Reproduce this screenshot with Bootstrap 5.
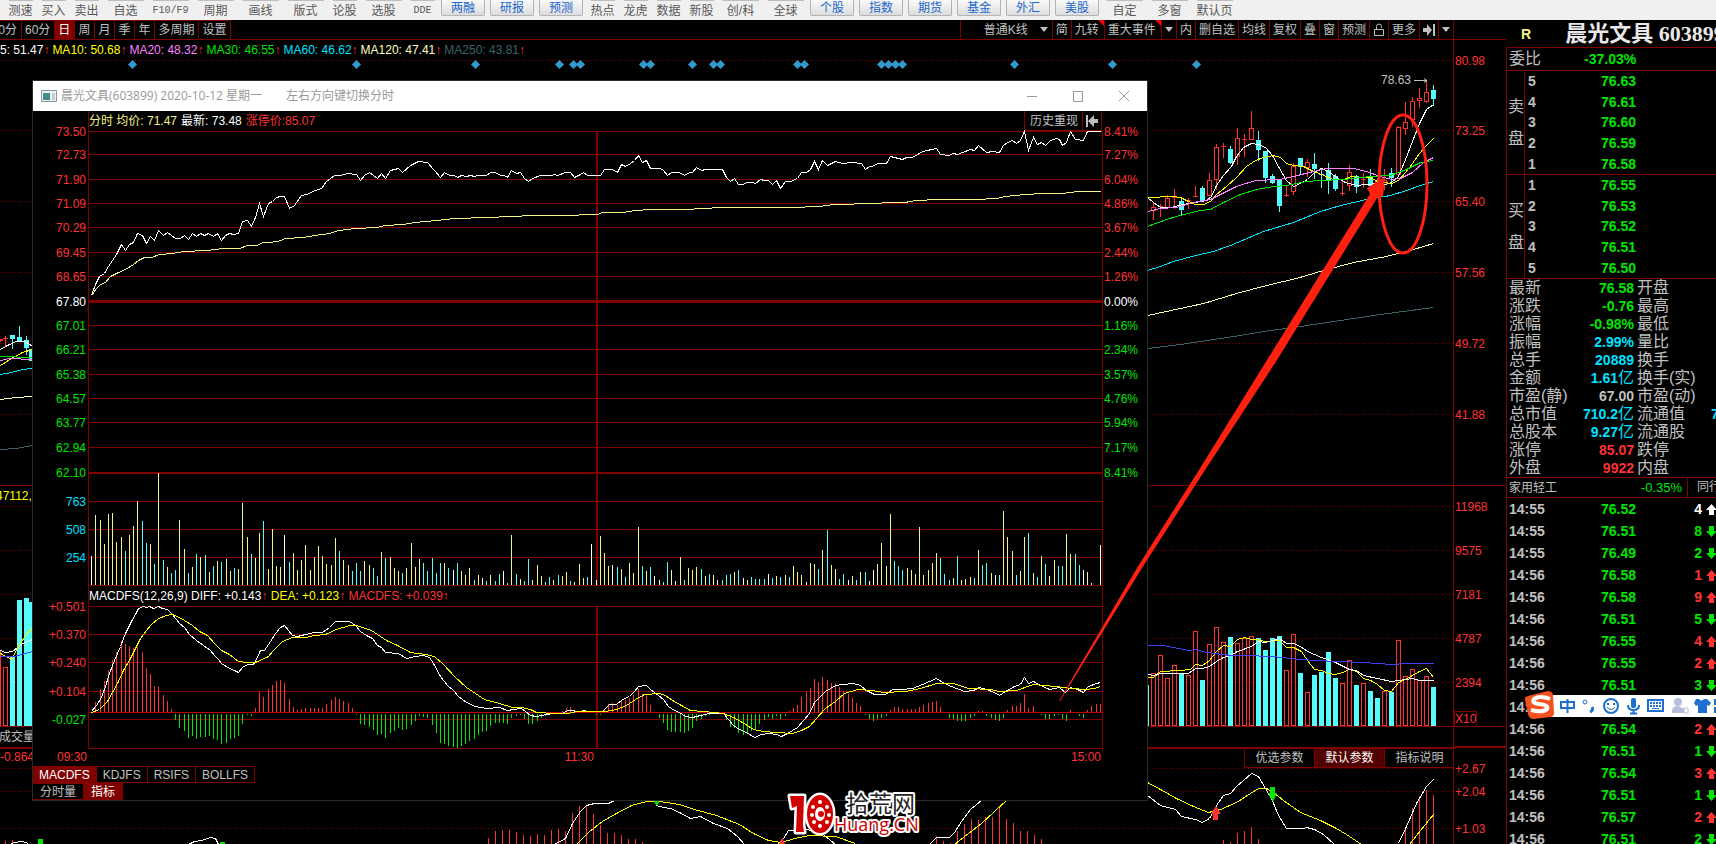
<!DOCTYPE html>
<html lang="zh-CN">
<head>
<meta charset="utf-8">
<meta name="viewport" content="width=device-width, initial-scale=1">
<title>晨光文具 603899</title>
<link href="https://cdn.jsdelivr.net/npm/bootstrap@5.3.0/dist/css/bootstrap.min.css" rel="stylesheet">
<style>
:root{--maroon:#800000;--red:#ff3232;--green:#00e600;--cyan:#00e0ff;--cream:#f5f587;--grey:#c0c0c0}
body{background:#000;color:var(--grey);font-family:"Liberation Sans","Noto Sans CJK SC",sans-serif;font-size:12px;line-height:16px;height:100vh;overflow:hidden}
button,select{font:inherit;color:inherit;background:none;border:0;padding:0;white-space:nowrap}
svg{display:block;overflow:visible}
svg text{font-size:12px;white-space:pre}
.t-red{color:var(--red)}.t-green{color:var(--green)}.t-cyan{color:var(--cyan)}.t-cream{color:var(--cream)}
.ma-10{color:#ff0}.ma-20{color:#ff80ff}.ma-120{color:#ffffc0}.ma-250{color:#3a6468}

.menu-bar{height:20px;flex:none;background:#f0f0f0;color:#585858;padding-left:4px}
.menu-bar button{flex:none;width:45px;height:20px;padding-top:1px;line-height:18px;background:linear-gradient(#bdbdbd,#bdbdbd) center top/36px 1px no-repeat}
.menu-bar .cell-s{width:33px;background-size:24px 1px}
.menu-bar .cell-btn{width:44px;height:16px;margin:0 3px 0 2px;line-height:14px;padding:0;color:#1a66cc;background:linear-gradient(#fafafa,#dcdcdc);border:1px solid #b4b4b4;border-top:0;border-radius:0 0 2px 2px}
.menu-mono{font-family:"Liberation Mono",monospace;font-size:10px}

.period-bar{height:20px;border-bottom:1px solid var(--maroon)}
.periods button{height:19px;padding:0 4px 0 3px;border-right:1px solid var(--maroon);border-top:1px solid var(--maroon)}
.periods .cut{width:22px;overflow:hidden;direction:rtl}
.periods .on,.tabs .on{background:var(--maroon);color:#fff}
.tools{margin-right:52px;border-right:1px solid var(--maroon)}
.tools>*{height:19px;padding:0 3px;border-left:1px solid var(--maroon);position:relative}
.tools select{width:92px;padding:0 0 0 23px;appearance:none;border-left:1px solid var(--maroon);background:url("data:image/svg+xml,%3Csvg xmlns='http://www.w3.org/2000/svg' width='8' height='5'%3E%3Cpath d='M0 0h8L4 5z' fill='%23c0c0c0'/%3E%3C/svg%3E") right 4px center no-repeat}
.tools .flag{padding-right:5px}
.tools .flag::after{content:"";position:absolute;right:0;top:0;border-top:6px solid red;border-left:6px solid transparent}
.ma-row{height:20px;gap:3px}

.macd-row{height:21px;border-top:2px solid var(--maroon);margin-right:52px}
.macd-tabs button{width:70px;border-left:1px solid var(--maroon);border-bottom:1px solid var(--maroon)}
.macd-tabs .on{background:#500000;color:#fff}

.history{top:60px;left:32px;right:358px;background:#000;border:1px solid #2b2b2b}
.history-title{height:30px;background:#fff;color:#999;padding:0 18px 0 8px;font-family:"Open Sans","Noto Sans CJK SC",sans-serif}
.history-head{height:20px;padding-right:45px}
.history-head .lead-in{margin-left:56px;gap:4px}
.history-head button{height:20px;border:1px solid var(--maroon);border-width:0 1px 1px 0;padding:0 3px}
.history-head .replay{padding:0 4px 0 5px;border-left-width:1px}
.tabs button{height:17px;padding:0 6px;border:1px solid var(--maroon);border-left-width:0}
.tabs .wide-tab{padding:0 7px}

.quote{width:210px;flex:none;overflow:hidden;white-space:nowrap}
.quote-name{height:27px;padding-left:15px}
.quote-name h1{font:bold 22px/27px "Liberation Serif","Noto Sans CJK SC",serif;color:#e8e8e8;margin:0 0 0 34px}
.quote-body{border:1px solid var(--maroon);border-width:1px 0 0 1px}
.num{font-weight:bold;font-size:14px}
.zh{font-size:16px}
.bid-ratio{height:22px;padding:0 0 0 2px}
.bid-ratio .num{margin-left:43px}
.book{height:104px;border-top:1px solid var(--maroon)}
.book .side{width:18px;padding-left:1px;border-right:1px solid var(--maroon);font-size:16px;gap:16px}
.book table{width:111px;height:103px}
.book td:first-child{padding-left:3px}
.quote td,.quote th{padding:0;line-height:14px;font-weight:normal}
.quote td.num{font-weight:bold}
.facts{height:199px;border-top:1px solid var(--maroon)}
.facts table{width:270px;height:198px;table-layout:fixed}
.facts td,.facts th{font-size:16px;line-height:16px}
.facts th{padding-left:2px}
.facts td.num{font-size:14px;text-align:right;padding-right:1px}
.trade{height:21px;border:1px solid var(--maroon);border-width:1px 0;padding-left:2px}
.trade a{color:var(--grey);text-decoration:none}
.trade .change{font-size:13px}
.trade .peer{height:19px;border-left:1px solid var(--maroon);margin-left:5px;padding:0 0 0 9px;line-height:19px;width:29px}
.ticks{width:209px;table-layout:fixed}
.ticks tr{height:22px}
.ticks td:first-child{padding-left:2px}
.ime{left:0;right:0;top:193px;height:28px}
.ime .strip{left:36px;right:0;top:4px;height:22px;background:#fff}
.mark-name{font-size:23px}
.mark-site{font-size:18px;font-family:"Open Sans",sans-serif}
</style>
</head>
<body class="d-flex flex-column">

<nav class="menu-bar d-flex">
  <button class="cell-s">测速</button><button class="cell-s">买入</button><button class="cell-s">卖出</button><button>自选</button><button class="menu-mono">F10/F9</button><button>周期</button><button>画线</button><button>版式</button><button class="cell-s">论股</button><button>选股</button><button class="cell-s menu-mono">DDE</button><button class="cell-btn">两融</button><button class="cell-btn">研报</button><button class="cell-btn">预测</button><button class="cell-s">热点</button><button class="cell-s">龙虎</button><button class="cell-s">数据</button><button class="cell-s">新股</button><button>创/科</button><button>全球</button><button class="cell-btn">个股</button><button class="cell-btn">指数</button><button class="cell-btn">期货</button><button class="cell-btn">基金</button><button class="cell-btn">外汇</button><button class="cell-btn">美股</button><button>自定</button><button>多窗</button><button>默认页</button>
</nav>

<div class="d-flex">
  <main class="position-relative flex-grow-1">
    <div class="period-bar d-flex justify-content-between">
      <div class="periods d-flex">
        <button class="cut">30分</button><button>60分</button><button class="on">日</button><button>周</button><button>月</button><button>季</button><button>年</button><button>多周期</button><button>设置</button>
      </div>
      <div class="tools d-flex">
        <select aria-label="K线类型"><option>普通K线</option></select>
        <button>简</button><button class="flag">九转</button><button class="flag">重大事件</button>
        <button aria-label="事件菜单"><svg width="8" height="5"><path d="M0 0h8L4 5z" fill="#c0c0c0"/></svg></button>
        <button>内</button><button>删自选</button><button>均线</button><button>复权</button><button>叠</button><button>窗</button><button>预测</button>
        <button aria-label="锁定"><svg width="12" height="14" fill="none" stroke="#c0c0c0"><path d="M1.500 6.500h9v6h-9zM3.500 6V3.500q0-2.500 2.500-2.500t2.500 2.500V5"/></svg></button>
        <button>更多</button>
        <button aria-label="收起"><svg width="12" height="12" fill="#c0c0c0"><path d="M0 4h4V0l5 6-5 6V8H0zM10 0h2v12h-2z"/></svg></button>
        <button aria-label="菜单"><svg width="8" height="5"><path d="M0 0h8L4 5z" fill="#c0c0c0"/></svg></button>
      </div>
    </div>

    <div class="ma-row d-flex align-items-center">
      <span class="text-white">5: 51.47<span class="t-red">↑</span></span>
      <span class="ma-10">MA10: 50.68<span class="t-red">↑</span></span>
      <span class="ma-20">MA20: 48.32<span class="t-red">↑</span></span>
      <span class="t-green">MA30: 46.55<span class="t-red">↑</span></span>
      <span class="t-cyan">MA60: 46.62<span class="t-red">↑</span></span>
      <span class="ma-120">MA120: 47.41<span class="t-red">↑</span></span>
      <span class="ma-250">MA250: 43.81<span class="t-red">↑</span></span>
    </div>

    <svg id="daily" viewBox="0 60 1506 687" width="100%"></svg>
    <div class="macd-row d-flex justify-content-between">
      <span class="t-red">-0.864</span>
      <div class="macd-tabs d-flex"><button>优选参数</button><button class="on">默认参数</button><button>指标说明</button></div>
    </div>
    <svg id="dailyMacd" viewBox="0 768 1506 76" width="100%"></svg>

    <section class="history position-absolute">
      <header class="history-title d-flex align-items-center">
        <svg width="16" height="14"><path d="M.5 1.500h15v11H.5z" fill="#eef2f6" stroke="#8a949c"/><path d="M2 4h7v7H2z" fill="#3f8f86"/><path d="M11 4h3v7h-3z" fill="#c8d0d8"/></svg>
        <span class="ms-1">晨光文具(603899) 2020-10-12 星期一</span><span class="ms-4">左右方向键切换分时</span>
        <div class="d-flex ms-auto">
          <button class="me-4" aria-label="最小化"><svg width="22" height="10" stroke="#999"><path d="M0 5.500h10"/></svg></button>
          <button class="me-4" aria-label="最大化"><svg width="22" height="11" fill="none" stroke="#999"><path d="M.5.5h9v10h-9z"/></svg></button>
          <button aria-label="关闭"><svg width="10" height="10" stroke="#999"><path d="M0 0l10 10M10 0L0 10"/></svg></button>
        </div>
      </header>
      <div class="history-head d-flex align-items-center">
        <div class="lead-in d-flex"><span class="t-cream">分时 均价: 71.47</span><span class="text-white">最新: 73.48</span><span class="t-red">涨停价:85.07</span></div>
        <button class="replay ms-auto">历史重现</button><button aria-label="返回"><svg width="12" height="12" fill="#c0c0c0"><path d="M0 0h2v12H0zM12 4H8V0L2 6l6 6V8h4z"/></svg></button>
      </div>
      <svg id="minute" viewBox="33 131 1114 635" width="100%"></svg>
      <div class="tabs d-flex"><button class="on">MACDFS</button><button>KDJFS</button><button>RSIFS</button><button>BOLLFS</button></div>
      <div class="tabs d-flex"><button class="wide-tab">分时量</button><button class="on wide-tab">指标</button></div>
    </section>

    <svg id="marks" class="position-absolute top-0 start-0 pe-none" viewBox="0 20 1506 824" width="100%">
      <ellipse cx="1403" cy="184" rx="24" ry="69" fill="none" stroke="#ff2010" stroke-width="3"/>
      <path fill="#ff2010" d="M1059 701L1137 568L1199 470L1267 360L1370 194L1367 188L1385 177L1383 197L1379 195L1277 360L1205 470L1142 568L1060 701Z"/>
      <g stroke-linejoin="round">
        <g stroke="#fff" stroke-width="5" paint-order="stroke" fill="#d00000">
          <path d="M790 796h14l-1 29 1 7h-8l1-26-5 2z"/>
          <ellipse cx="820" cy="814" rx="13" ry="19"/>
        </g>
        <g fill="#fff"><ellipse cx="820" cy="814" rx="5" ry="7"/><circle cx="820" cy="802" r="2"/><circle cx="820" cy="826" r="2"/><circle cx="813" cy="807" r="2"/><circle cx="827" cy="807" r="2"/><circle cx="812" cy="815" r="2"/><circle cx="829" cy="815" r="2"/><circle cx="814" cy="822" r="2"/><circle cx="827" cy="822" r="2"/></g>
        <circle cx="821" cy="814" r="3" fill="#d00000"/>
        <g stroke="#fff" stroke-width="4" paint-order="stroke">
          <text class="mark-name" x="846" y="812" fill="#222">拾荒网</text>
          <text class="mark-site" x="834" y="831" fill="#d00000">Huang.CN</text>
        </g>
      </g>
    </svg>
  </main>

  <aside class="quote">
    <div class="quote-name d-flex align-items-center"><b class="num t-cream">R</b><h1>晨光文具 603899</h1></div>
    <div class="quote-body">
      <div class="bid-ratio d-flex align-items-center"><span class="zh">委比</span><span class="num t-green">-37.03%</span></div>
      <div class="book d-flex"><div class="side d-flex flex-column justify-content-center"><span>卖</span><span>盘</span></div>
        <table><tr><td class="num">5<td class="num t-green text-end">76.63<tr><td class="num">4<td class="num t-green text-end">76.61<tr><td class="num">3<td class="num t-green text-end">76.60<tr><td class="num">2<td class="num t-green text-end">76.59<tr><td class="num">1<td class="num t-green text-end">76.58</table></div>
      <div class="book d-flex"><div class="side d-flex flex-column justify-content-center"><span>买</span><span>盘</span></div>
        <table><tr><td class="num">1<td class="num t-green text-end">76.55<tr><td class="num">2<td class="num t-green text-end">76.53<tr><td class="num">3<td class="num t-green text-end">76.52<tr><td class="num">4<td class="num t-green text-end">76.51<tr><td class="num">5<td class="num t-green text-end">76.50</table></div>
      <div class="facts"><table>
        <colgroup><col width="62"><col width="66"><col width="76"><col width="66"></colgroup>
        <tr><th>最新<td class="num t-green">76.58<th>开盘<td>
        <tr><th>涨跌<td class="num t-green">-0.76<th>最高<td>
        <tr><th>涨幅<td class="num t-green">-0.98%<th>最低<td>
        <tr><th>振幅<td class="num t-cyan">2.99%<th>量比<td>
        <tr><th>总手<td class="num t-cyan">20889<th>换手<td>
        <tr><th>金额<td class="num t-cyan">1.61<span class="zh fw-normal">亿</span><th>换手(实)<td>
        <tr><th>市盈(静)<td class="num">67.00<th>市盈(动)<td>
        <tr><th>总市值<td class="num t-cyan">710.2<span class="zh fw-normal">亿</span><th>流通值<td class="num t-cyan text-start">710.2
        <tr><th>总股本<td class="num t-cyan">9.27<span class="zh fw-normal">亿</span><th>流通股<td>
        <tr><th>涨停<td class="num t-red">85.07<th>跌停<td>
        <tr><th>外盘<td class="num t-red">9922<th>内盘<td>
      </table></div>
      <div class="trade d-flex align-items-center"><a href="#">家用轻工</a><span class="change t-green ms-auto">-0.35%</span><a href="#" class="peer">同行</a></div>
      <div class="position-relative">
        <table class="ticks"><colgroup><col width="80"><col width="49"><col width="66"><col width="14"></colgroup><tbody id="ticks"></tbody></table>
        <div class="ime position-absolute">
          <div class="strip position-absolute"></div>
          <svg class="position-relative" width="209" height="28" fill="none" stroke="#1f6fd0" stroke-width="2">
            <path d="M21 5l20-5q4 0 5 4l1 18q0 4-4 4l-16 2q-5 0-6-5l-3-14q-1-3 3-4z" fill="#f4511e" stroke="none"/>
            <path d="M43 8q-10-4-16 0-3 4 5 5 10 1 8 5-4 4-16 1" stroke="#fff" stroke-width="4"/>
            <path d="M54 11h13v6H54zM60.500 8v14"/>
            <circle cx="78" cy="11" r="2" stroke-width="1"/><path d="M85 16q2 3-2 5" stroke-width="3"/>
            <circle cx="104" cy="15" r="7"/><path d="M101 12v2M107 12v2" /><path d="M100 16q4 5 8 0" stroke-width="1"/>
            <rect x="124" y="7" width="5" height="10" rx="2" fill="#1f6fd0" stroke="none"/><path d="M121 14q0 5 5.500 5t5.500-5M126.500 19v4M123 22.500h7"/>
            <path d="M141 9h15v11h-15z"/><path d="M143 12h11M143 15h11" stroke-dasharray="2 1"/><path d="M145 17.500h7" stroke-width="1"/>
            <g fill="#b4c0da" stroke="none"><circle cx="171" cy="11" r="4"/><path d="M165 22v-3q1-4 6-4l3 1v6zM173 17h7v5h-7z"/></g><path d="M177 17h4v5h-4z" fill="#fff" stroke="#b4c0da" stroke-width="1"/>
            <path d="M189 8h3q2 3 5 0h3l4 4-2 3-2-1v8h-9v-8l-2 1-2-3z" fill="#1f6fd0" stroke="none"/>
            <path d="M207 8h2v6h-2zM207 16h2v6h-2z" fill="#1f6fd0" stroke="none"/>
          </svg>
        </div>
      </div>
    </div>
  </aside>
</div>

<script src="https://cdn.jsdelivr.net/npm/bootstrap@5.3.0/dist/js/bootstrap.bundle.min.js"></script>
<script>
const NS='http://www.w3.org/2000/svg', $=id=>document.getElementById(id);
const MAROON='#800000',RED='#ff3232',GREEN='#00e600',CYAN='#54fcfc',CREAM='#f5f587',W='#ffffff',Y='#ffff00',GREY='#c0c0c0';
/* Sample grids: origin x, origin y, samples per unit in x and y */
const A=[0,100,2.7034,3],B=[580,100,2.7034,3],C=[0,460,2.7034,3],D=[580,460,2.7034,3],E=[1140,470,3,3],F=[1140,60,3,3];
const X=(g,x)=>g[0]+x/g[2], Yv=(g,y)=>g[1]+y/g[3], R=Math.floor;
function el(p,n,a,t){const e=document.createElementNS(NS,n);for(const k in a)e.setAttribute(k,a[k]);if(t!=null)e.textContent=t;p.appendChild(e);return e}
const box=(p,x,y,w,h,c)=>el(p,'rect',{x,y,width:w,height:h,fill:c});
const dots=(p,y,x0=0,x1=1453)=>el(p,'path',{d:`M${x0} ${y+.5}H${x1}`,stroke:MAROON,'stroke-dasharray':'1 2','shape-rendering':'crispEdges'});
const label=(p,x,cy,t,c,a='start')=>el(p,'text',{x,y:cy+4,fill:c,'text-anchor':a},t);
function line(p,c,...parts){const pts=[];for(const [g,s] of parts)for(const q of s.trim().split(/\s+/)){const [x,y]=q.split(',');pts.push((R(X(g,+x))+.5)+','+(R(Yv(g,+y))+.5))}
 el(p,'polyline',{points:pts.join(' '),fill:'none',stroke:c,'shape-rendering':'crispEdges'})}
function bars(p,g,base,c,s){for(const q of s.trim().split(/\s+/)){let col=c,v=q;if(!c){col={y:CREAM,c:CYAN,w:W}[q[0]];v=q.slice(1)}
 const [x,y]=v.split(',');const y0=R(Yv(g,Math.min(+y,base))),y1=R(Yv(g,Math.max(+y,base)));box(p,R(X(g,+x)),y0,1,Math.max(1,y1-y0),col)}}
function candles(p,g,s){for(const q of s.trim().split(/\s+/)){const [x,a,b,c,d]=q.slice(1).split(',').map(Number),cx=R(X(g,x)),col=q[0]=='r'?RED:CYAN;
 const ya=R(Yv(g,a)),yb=R(Yv(g,b)),yc=R(Yv(g,c)),yd=R(Yv(g,d));
 box(p,cx,ya,1,yb-ya,col);box(p,cx,yc,1,Math.max(0,yd-yc),col);
 if(q[0]=='r'&&yc-yb>2)el(p,'rect',{x:cx-1.5,y:yb+.5,width:4,height:yc-yb-1,fill:'none',stroke:RED});else box(p,cx-2,yb,5,Math.max(1,yc-yb),col)}}
function volumes(p,g,base,s){const y1=R(Yv(g,base));for(const q of s.trim().split(/\s+/)){const [x,y]=q.slice(1).split(',').map(Number),cx=R(X(g,x)),y0=R(Yv(g,y));
 if(q[0]=='r')el(p,'rect',{x:cx-1.5,y:y0+.5,width:4,height:y1-y0-1,fill:'none',stroke:RED});else box(p,cx-2,y0,5,y1-y0,CYAN)}}

/* ---- daily candles ---- */
let s=$('daily');
[60,130,201,272,343,414,506,550,594,638,682].forEach(y=>dots(s,y));
[[60,'80.98'],[130,'73.25'],[201,'65.40'],[272,'57.56'],[343,'49.72'],[414,'41.88'],[506,'11968'],[550,'9575'],[594,'7181'],[638,'4787'],[682,'2394']].forEach(([y,t])=>label(s,1455,y+1,t,RED));
box(s,1453,40,1,804,MAROON);box(s,0,485,1506,1,MAROON);box(s,0,726,1506,1,MAROON);
el(s,'rect',{x:1454.5,y:711.5,width:22,height:15,fill:'none',stroke:MAROON});label(s,1455,719,'X10',RED);
[132,356,475,559,573,580,643,650,692,713,720,797,804,881,888,895,902,1014,1112,1196].forEach(x=>el(s,'path',{d:`M${x-4} 64.5l4.500-4.500 4.500 4.500-4.500 4.500z`,fill:'#2f9acb'}));
candles(s,F,`r40,430,441,455,480 r61,433,438,441,471 r82,406,414,446,447 r103,387,413,415,449 c124,418,425,452,465 r145,414,421,424,449 r166,378,408,410,413 c187,379,384,423,423 r208,339,361,408,408 r229,252,262,361,391 r250,249,259,261,294 c271,259,267,309,314 r292,204,235,292,315 r313,222,238,240,291 r334,153,205,240,240 c355,213,240,272,303 c376,273,273,354,369 c397,342,348,369,372 c418,357,357,438,456 r439,375,405,407,411 r460,309,319,397,405 c481,294,294,322,345 r502,297,307,325,351 c523,279,312,328,357 c544,327,343,345,384 c565,309,330,365,402 c586,342,348,387,393 r607,360,399,401,408 r628,315,337,378,393 c649,345,348,381,399 r670,339,357,360,384 c691,327,348,378,384 r712,354,362,388,396 r733,327,360,376,390 c754,324,339,354,381 r775,198,202,346,346 r796,126,187,208,225 r817,111,124,180,201 r838,84,115,125,144 r859,63,97,128,129 c880,75,90,117,138`);
line(s,W,[F,'22,413 40,427 60,442 90,443 130,434 165,428 200,420 215,408 229,377 250,345 275,318 290,290 310,263 334,250 355,253 376,263 397,287 418,325 439,360 460,379 481,370 502,358 523,337 545,326 565,335 590,352 615,367 649,376 680,372 712,370 735,372 754,366 775,350 796,297 817,245 838,190 859,147 879,132']);
line(s,Y,[F,'22,411 100,410 120,413 145,425 165,433 190,433 210,424 230,402 260,378 290,352 320,320 345,300 370,292 400,287 420,293 439,310 460,317 490,318 515,331 545,342 580,357 610,359 635,350 660,352 690,353 712,364 754,370 775,360 796,338 817,310 838,280 859,256 879,234']);
line(s,'#ff80ff',[F,'22,455 60,446 110,441 160,427 210,417 240,402 290,380 345,362 418,358 460,349 520,334 560,325 640,324 680,335 720,350 754,357 780,354 817,336 850,307 879,291']);
line(s,GREEN,[F,'22,498 80,477 130,463 180,452 210,448 250,426 300,404 350,388 400,380 440,375 500,364 540,362 610,359 690,350 750,345 800,328 840,308 879,300']);
line(s,'#00e0ff',[F,'22,631 60,620 100,604 165,587 220,573 270,555 370,513 460,487 540,455 600,437 680,419 750,407 800,391 850,372 879,364']);
line(s,'#ffffb0',[F,'22,766 80,753 190,730 290,700 380,676 470,655 550,631 640,606 740,589 820,568 879,549']);
line(s,'#3a6468',[F,'22,864 120,852 300,827 390,811 480,799 600,780 720,762 879,741']);
label(s,1381,80,'78.63',GREY);el(s,'path',{d:'M1414 80.5h13m-3-2l3 2-3 2',fill:'none',stroke:GREY});
candles(s,A,'r0,717,719,724,727 r15,708,714,718,741 c34,705,705,719,747 c53,678,711,728,728 c71,708,720,746,765 c86,747,747,785,785');
line(s,W,[A,'0,748 20,735 45,724 70,725 88,738']);line(s,Y,[A,'0,795 30,775 60,757 88,747']);line(s,GREEN,[A,'0,770 88,773']);line(s,'#ff80ff',[A,'0,781 25,776 88,777']);
line(s,'#00e0ff',[A,'0,824 30,818 60,809 88,805']);line(s,'#ffffb0',[A,'0,898 45,893 88,889']);line(s,'#3a6468',[A,'0,1048 45,1044 88,1036']);
/* daily volume */
label(s,-4,496,'47112,',Y);label(s,-1,737,'成交量',GREY);
volumes(s,C,800,'r-3,575 r15,622 c34,590 c53,420 c71,414 c86,426');
line(s,W,[C,'0,572 15,577 35,573 60,550 88,538']);line(s,Y,[C,'0,580 30,597 50,560 70,525 88,503']);line(s,'#4040ff',[C,'0,590 40,588 88,573']);
volumes(s,E,769,'c19,645 r40,610 r61,556 r82,625 r103,586 c124,610 r145,615 r166,484 c187,630 r208,523 r229,472 r250,517 c271,501 r292,519 r313,504 r334,499 c355,505 c376,540 c397,504 c418,498 r439,600 r460,493 c481,609 r502,667 c523,615 c544,606 c565,546 c586,624 r607,640 r628,571 c649,645 r670,640 c691,663 c712,684 r733,663 c754,666 r775,511 r796,619 r817,598 r838,630 r859,619 c880,651');
line(s,Y,[E,'22,622 40,622 60,604 120,600 150,597 166,583 187,586 208,571 229,543 250,526 271,528 292,507 313,502 334,507 350,508 376,515 418,511 439,531 460,531 485,544 502,571 523,597 544,600 565,609 586,613 607,606 628,598 649,603 670,625 691,631 712,643 733,661 754,664 775,637 796,629 817,616 838,605 859,595 879,622']);
line(s,W,[E,'22,613 40,615 60,610 145,610 166,595 187,595 208,589 229,573 250,561 271,555 292,544 334,529 355,515 376,517 397,511 418,505 439,520 460,519 481,528 502,544 544,563 586,578 628,598 649,601 670,616 712,626 754,634 796,629 817,626 838,631 879,631']);
line(s,'#4040ff',[E,'22,526 70,526 145,541 166,538 200,546 271,555 313,557 397,559 481,568 586,573 670,577 754,583 800,580 879,580']);

/* ---- daily MACD ---- */
s=$('dailyMacd');
[768,791,828].forEach((y,i)=>{dots(s,y);label(s,1455,y+1,['+2.67','+2.04','+1.03'][i],RED)});
box(s,1453,746,53,2,MAROON);
bars(s,C,1152,RED,'15,1143 33,1140 1320,1134 1339,1113 1358,1110 1377,1110 1396,1116 1415,1125 1434,1128 1453,1122 1472,1125 1491,1110 1510,1107 1529,1113 1547,1059 1566,1038');
bars(s,D,1152,RED,'18,1037 36,1064 55,1095 74,1119 93,1119 112,1125 130,1137 150,1137 168,1146 963,1128 982,1143 1001,1150 1020,1113 1039,1092 1058,1077 1077,1080 1096,1071 1115,1071 1134,1040 1153,1077 1172,1089 1191,1113 1209,1113 1228,1125 1247,1137');
bars(s,E,1122,RED,'250,1110 271,1116 292,1089 313,1083 334,1071 355,1107 796,1080 817,1015 838,980 859,960 880,975');
line(s,W,[C,'25,1152 40,1146 60,1144 78,1150']);line(s,W,[C,'510,1152 525,1143 545,1140 568,1132 582,1136 590,1152']);
line(s,W,[C,'1500,1152 1530,1134 1548,1090'],[D,'0,1053 18,1035 40,1030 76,1029 92,1020']);
line(s,W,[D,'208,1036 225,1042 245,1045 270,1058 300,1074 325,1070 360,1091 400,1105 425,1128 445,1152']);
line(s,W,[D,'535,1152 550,1135 565,1112 600,1108 640,1112 660,1126 690,1152']);line(s,W,[D,'945,1152 963,1133 998,1133 1012,1118 1030,1085 1055,1047 1086,1021']);
line(s,Y,[D,'-10,1152 0,1142 25,1114 60,1085 100,1060 140,1036 180,1024 215,1024 270,1032 310,1047 370,1066 430,1093 470,1120 510,1140 545,1146 580,1135 620,1125 690,1128 745,1151']);
line(s,Y,[D,'1012,1152 1050,1120 1085,1090 1120,1053 1153,1021']);
line(s,Y,[E,'22,936 60,957 110,984 160,1010 205,1027 240,1018 290,998 330,969 355,955 380,956 400,966 430,990 480,1027 540,1052 590,1076 620,1094 665,1122']);line(s,Y,[E,'808,1122 840,1080 879,1032']);
line(s,W,[E,'22,976 60,1005 105,1018 125,1039 165,1047 187,1057 208,1046 220,1025 235,996 250,975 270,971 290,948 310,931 335,910 355,918 375,955 395,985 415,1035 438,1075 490,1076 500,1072 522,1077 550,1093 582,1122']);line(s,W,[E,'775,1120 800,1070 830,1000 858,948 879,927']);
box(s,38,839,5,5,GREEN);box(s,220,842,5,2,GREEN);
el(s,'path',{d:'M654 800h5v2l-2 4-3-4z',fill:GREEN});el(s,'path',{d:'M779 844l3-6 3 6z',fill:RED});
el(s,'path',{d:'M1216 806l5 8h-3v6h-5v-6h-2z',fill:RED});el(s,'path',{d:'M1270 787h5v6h2l-4 9-5-9h2z',fill:GREEN});

/* ---- intraday window ---- */
s=$('minute');
const left=['73.50','72.73','71.90','71.09','70.29','69.45','68.65','67.80','67.01','66.21','65.38','64.57','63.77','62.94','62.10'];
const right=['8.41%','7.27%','6.04%','4.86%','3.67%','2.44%','1.26%','0.00%','1.16%','2.34%','3.57%','4.76%','5.94%','7.17%','8.41%'];
[131,154,179,203,227,252,276,301,325,349,374,398,422,447,472].forEach((y,i)=>{const c=i<7?RED:i==7?W:GREEN;
 box(s,89,i==7?300:y,1014,i==7?3:i==14?2:1,MAROON);label(s,86,y+1,left[i],c,'end');label(s,1104,y+1,right[i],c)});
[501,529,557].forEach((y,i)=>{box(s,89,y,1014,1,MAROON);label(s,86,y+1,['763','508','254'][i],'#00e0ff','end')});
box(s,89,585,1014,1,MAROON);box(s,88,111,1,638,MAROON);box(s,1102,131,1,620,MAROON);box(s,596,131,2,455,MAROON);box(s,596,606,2,143,MAROON);
[606,634,662,691,719].forEach((y,i)=>{box(s,89,y,1014,1,MAROON);label(s,86,y+1,['+0.501','+0.370','+0.240','+0.104','-0.027'][i],i==4?GREEN:RED,'end')});
box(s,89,748,1014,1,MAROON);box(s,89,712,1014,1,'#c00000');
label(s,57,757,'09:30',RED);label(s,594,757,'11:30',RED,'end');label(s,1101,757,'15:00',RED,'end');
const h=label(s,89,596,'',W);[['MACDFS(12,26,9) DIFF: +0.143',W],['↑ ',RED],['DEA: +0.123',Y],['↑ ',RED],['MACDFS: +0.039',RED],['↑',RED]].forEach(([t,c])=>el(h,'tspan',{fill:c},t));
line(s,W,[A,`247,586 258,552 270,528 283,521 292,500 303,480 315,463 328,433 339,451 351,433 361,427 372,400 385,406 396,430 407,409 418,420 428,391 442,405 453,397 464,406 475,415 487,415 499,406 510,418 521,400 532,409 543,400 554,406 565,400 577,409 588,400 598,421 610,406 621,400 632,403 644,400 655,364 668,361 680,379 690,352 702,310 712,349 725,310 737,304 748,292 758,289 769,289 782,325 795,316 815,286 830,282 845,273 870,264 883,243 903,227 920,226 940,220 965,223 975,241 986,225 1000,217 1021,235 1032,220 1043,235 1056,211 1077,205 1089,216 1111,196 1132,184 1156,187 1191,232 1202,217 1214,226 1230,227 1237,232 1248,226 1260,229 1271,226 1282,229 1290,226 1314,226 1325,217 1340,217 1352,226 1364,226 1373,232 1383,211 1397,219 1408,218 1419,235 1429,244 1440,235 1460,226 1490,226 1498,222 1508,227 1530,217 1543,217 1553,232`],
[B,`0,223 9,217 20,226 56,226 66,208 88,208 101,216 112,193 123,199 136,191 147,181 159,166 169,187 179,181 190,205 217,205 226,211 236,226 247,217 270,217 282,226 295,217 304,217 314,202 329,211 340,208 385,208 396,232 407,244 417,235 428,253 440,253 452,247 465,247 474,250 487,238 498,241 510,241 521,253 531,241 542,265 555,244 570,243 588,235 598,217 612,216 622,208 633,184 644,208 656,181 669,196 691,184 710,190 737,187 760,190 771,208 783,199 792,199 805,190 829,190 839,169 871,178 883,172 898,172 918,160 927,155 963,145 975,163 996,165 1009,160 1020,162 1055,147 1067,151 1077,136 1100,156 1115,154 1134,157 1146,136 1156,127 1169,121 1181,129 1190,120 1202,94 1213,151 1226,112 1236,133 1248,127 1259,136 1272,121 1288,114 1295,119 1304,136 1315,127 1326,95 1339,118 1361,121 1373,94 1406,94`]);
line(s,CREAM,[A,'247,586 262,565 273,552 285,546 300,529 315,519 340,507 360,494 375,482 390,472 410,472 430,462 465,460 497,455 560,450 605,446 648,445 670,437 695,435 710,428 730,426 760,420 770,416 820,411 850,405 890,399 915,391 960,386 1020,382 1040,377 1090,373 1120,366 1180,361 1230,356 1320,353 1380,350 1445,347 1560,346'],
[B,'0,343 46,343 60,338 115,337 150,331 190,328 285,327 380,323 568,322 648,318 685,313 800,311 835,307 878,306 910,301 970,298 1070,297 1125,294 1150,290 1205,284 1250,281 1305,279 1345,274 1406,274']);
bars(s,C,375,null,`w247,288 y258,165 y271,180 y282,252 y293,162 y304,159 y315,246 y328,231 c339,273 y350,225 y361,198 y371,123 c385,183 c396,249 y407,252 c417,312 y428,40 c442,300 y452,321 c463,339 c474,330 y485,180 y498,267 c509,339 y520,321 c531,282 y542,291 c555,285 y566,336 c577,318 y588,303 c598,306 y612,297 y622,333 c633,324 y644,327 y655,129 y669,231 c680,282 y690,294 y701,219 c712,183 y725,327 y736,207 y747,318 y758,321 w769,225 c782,306 y793,279 y804,330 y815,300 y826,255 y839,330 y850,291 y861,258 y872,288 y882,312 y896,315 y907,234 c917,273 y928,300 y942,315 c953,333 c963,309 c974,333 y985,303 y999,315 c1009,324 c1020,348 y1031,276 c1042,294 y1055,291 y1066,324 y1077,333 c1088,339 y1099,324 y1112,249 y1123,321 y1134,297 c1145,309 c1155,333 c1169,294 c1180,339 c1191,309 y1202,309 c1212,324 w1226,330 c1236,309 y1247,333 y1258,345 y1269,324 c1282,360 y1293,345 w1304,354 c1315,363 y1326,345 c1339,363 c1350,342 w1361,333 c1372,369 y1383,225 c1396,342 y1407,357 c1418,363 c1428,297 y1439,360 y1453,315 y1464,348 c1474,366 c1485,351 y1496,360 c1510,345 y1520,348 y1531,336 c1542,363 w1553,366 y1566,312`);
bars(s,D,375,null,`y9,354 c20,351 w31,252 w44,360 y55,228 y66,279 y77,318 w88,315 c101,321 y112,327 c123,351 y133,309 y144,339 y158,201 c169,318 y180,333 c190,321 w201,348 w215,360 c226,366 c236,306 y247,330 w258,363 y271,291 c282,360 y293,324 y304,330 y315,321 c328,327 y339,348 c350,342 y361,345 w371,360 c385,360 c396,345 c407,342 y417,336 c428,330 w442,354 y452,360 c463,351 c474,357 c485,357 c498,357 w509,342 c520,354 y531,348 c542,351 y555,345 c566,351 y577,318 y588,336 y598,345 w612,366 y622,309 y633,312 c644,327 y655,270 c669,210 y680,315 y690,327 c701,357 c712,342 w725,360 y736,348 c747,360 y758,336 c771,336 w782,363 w793,330 y804,312 y815,249 y828,318 y839,162 c850,303 c861,318 c871,330 y885,324 y896,330 y907,342 y917,201 y928,345 y942,330 y953,309 y963,279 c974,294 c985,342 c999,360 y1009,354 c1020,288 y1031,360 y1042,357 y1055,351 c1066,354 y1077,270 c1088,315 c1099,309 y1112,339 w1123,345 c1134,345 y1145,153 y1155,231 y1169,273 c1180,345 y1191,333 y1202,231 c1212,219 y1226,339 c1236,351 y1247,288 c1258,312 y1269,348 y1282,300 c1293,318 c1304,318 y1315,222 y1326,282 c1339,282 c1350,315 w1361,330 y1372,336 w1383,369 w1406,255`);
bars(s,C,757,RED,'258,726 271,687 282,663 293,630 304,600 315,576 328,543 339,552 350,558 361,564 371,561 385,576 396,624 407,642 417,678 428,681 442,705 452,723 463,747 690,744 701,696 712,711 725,687 736,675 747,663 758,660 769,669 782,717 793,741 804,750 815,747 826,744 839,744 850,744 861,744 872,744 882,732 896,720 907,711 917,717 928,723 942,729 953,744 1520,753 1531,746 1542,741');
bars(s,C,762,GREEN,'474,780 485,804 498,813 509,834 520,828 531,837 542,831 555,831 566,828 577,837 588,840 598,852 612,849 622,837 633,834 644,828 655,792 669,765 680,768 963,762 974,792 985,797 999,801 1009,810 1020,825 1031,822 1042,834 1055,819 1066,813 1077,804 1088,810 1099,807 1112,795 1123,783 1134,770 1145,771 1155,774 1169,795 1180,819 1191,849 1202,852 1212,858 1226,861 1236,864 1247,858 1258,852 1269,843 1282,837 1293,825 1304,816 1315,813 1326,798 1339,789 1350,789 1361,789 1372,792 1383,774 1396,768 1407,765 1418,777 1428,792 1439,792 1453,783 1464,776 1474,770 1485,766');
bars(s,D,757,RED,'9,753 66,747 77,732 88,729 101,735 112,723 123,720 133,714 144,705 158,687 169,702 180,705 190,735 566,753 577,744 588,735 598,711 612,696 622,684 633,657 644,666 655,651 669,660 680,669 690,669 701,681 712,693 725,702 736,714 747,729 758,738 839,750 850,741 861,741 871,747 885,747 896,747 907,747 917,741 928,735 942,729 953,726 963,723 974,741 1077,753 1088,753 1155,750 1169,738 1180,738 1191,729 1202,702 1212,744 1226,738 1326,750 1372,750 1383,738 1396,732 1406,732');
bars(s,D,762,GREEN,'44,764 55,763 215,774 226,789 236,810 247,816 258,816 271,816 282,819 293,813 304,804 315,783 328,777 339,768 350,765 396,780 407,801 417,804 428,819 442,825 452,822 463,813 474,807 485,792 498,780 509,771 520,777 531,768 542,777 555,768 771,765 782,777 793,783 804,777 815,774 828,770 999,774 1009,777 1020,783 1031,783 1042,783 1055,774 1066,770 1099,768 1112,774 1123,780 1134,783 1145,774 1247,765 1258,777 1269,777 1282,768 1293,766 1304,777 1315,783 1350,768 1361,774');
line(s,W,[C,'248,755 262,735 275,712 285,680 297,640 310,600 325,558 340,520 355,485 365,462 375,446 387,439 397,442 405,439 415,444 428,439 440,444 452,448 465,463 485,491 498,502 511,524 530,541 550,556 568,570 580,586 592,598 600,611 620,624 634,630 644,637 655,621 670,612 684,612 694,597 703,571 715,570 730,545 745,520 757,502 768,496 790,525 805,529 825,522 850,517 873,517 890,502 908,485 945,484 962,495 975,514 990,526 1006,535 1020,556 1032,562 1042,577 1077,580 1100,595 1123,588 1145,586 1160,593 1172,610 1190,648 1210,675 1225,690 1240,708 1260,726 1285,738 1315,745 1350,743 1372,752 1388,747 1410,745 1420,753 1435,767 1450,768 1465,765 1480,763 1495,760 1520,759 1535,750 1545,750 1560,755'],
[D,'0,754 12,750 20,754 60,754 80,733 100,734 115,718 133,709 147,694 157,680 180,676 190,687 212,705 225,718 238,739 255,750 270,757 285,769 303,772 325,765 350,760 388,760 402,778 415,797 430,807 450,818 472,832 490,824 512,819 530,822 545,828 560,820 588,803 603,782 620,760 635,727 648,711 665,695 690,676 712,674 740,670 757,676 775,690 795,703 827,703 845,687 870,687 900,685 925,672 963,655 985,670 1005,679 1040,693 1065,690 1080,683 1100,689 1120,696 1134,705 1150,694 1175,678 1192,672 1202,652 1212,670 1227,664 1245,677 1270,689 1295,683 1313,697 1325,683 1345,687 1361,696 1375,678 1395,669 1406,667']);
line(s,Y,[C,'248,757 270,747 290,724 305,697 320,665 335,632 350,600 365,565 380,536 395,511 410,492 428,476 450,466 465,464 480,468 500,480 520,497 540,513 560,527 580,549 600,570 620,583 645,604 670,608 690,607 725,588 740,570 765,543 790,533 825,531 850,526 880,522 910,507 945,496 965,496 1005,510 1045,542 1075,557 1110,578 1150,582 1175,588 1200,614 1230,649 1260,682 1310,718 1350,730 1385,741 1410,743 1435,748 1450,758 1500,760 1535,760 1560,753'],
[D,'0,754 70,754 100,747 125,736 150,717 175,702 215,700 230,706 250,720 275,736 300,751 333,754 388,759 415,772 440,787 470,807 495,814 530,817 575,820 600,811 620,798 640,775 665,745 690,723 715,701 750,687 790,690 820,697 880,693 920,685 965,670 1010,671 1050,684 1110,687 1135,694 1180,690 1225,674 1285,680 1330,685 1370,689 1390,685 1406,679']);

/* ---- trade ticks: time, price, lots, direction ---- */
const rows=[['14:55','76.52',4,'w'],['14:55','76.51',8,'d'],['14:55','76.49',2,'d'],['14:56','76.58',1,'u'],['14:56','76.58',9,'u'],['14:56','76.51',5,'d'],['14:56','76.55',4,'u'],['14:56','76.55',2,'u'],['14:56','76.51',3,'d'],['14:','',' ',''],['14:56','76.54',2,'u'],['14:56','76.51',1,'d'],['14:56','76.54',3,'u'],['14:56','76.51',1,'d'],['14:56','76.57',2,'u'],['14:56','76.51',2,'d']];
$('ticks').innerHTML=rows.map(([t,p,n,d])=>{const c={w:'text-white',u:'t-red',d:'t-green'}[d]||'';
 const path=d=='d'?'M3 0h5v5h3L5.500 11 0 5h3z':'M5.500 0L11 6H8v5H3V6H0z';
 return `<tr><td class="num">${t}</td><td class="num t-green text-end">${p}</td><td class="num text-end ${c}">${n}</td><td class="${c}">${d?`<svg class="ms-1" width="11" height="11" fill="currentColor"><path d="${path}"/></svg>`:''}</td></tr>`}).join('');
</script>
</body>
</html>
